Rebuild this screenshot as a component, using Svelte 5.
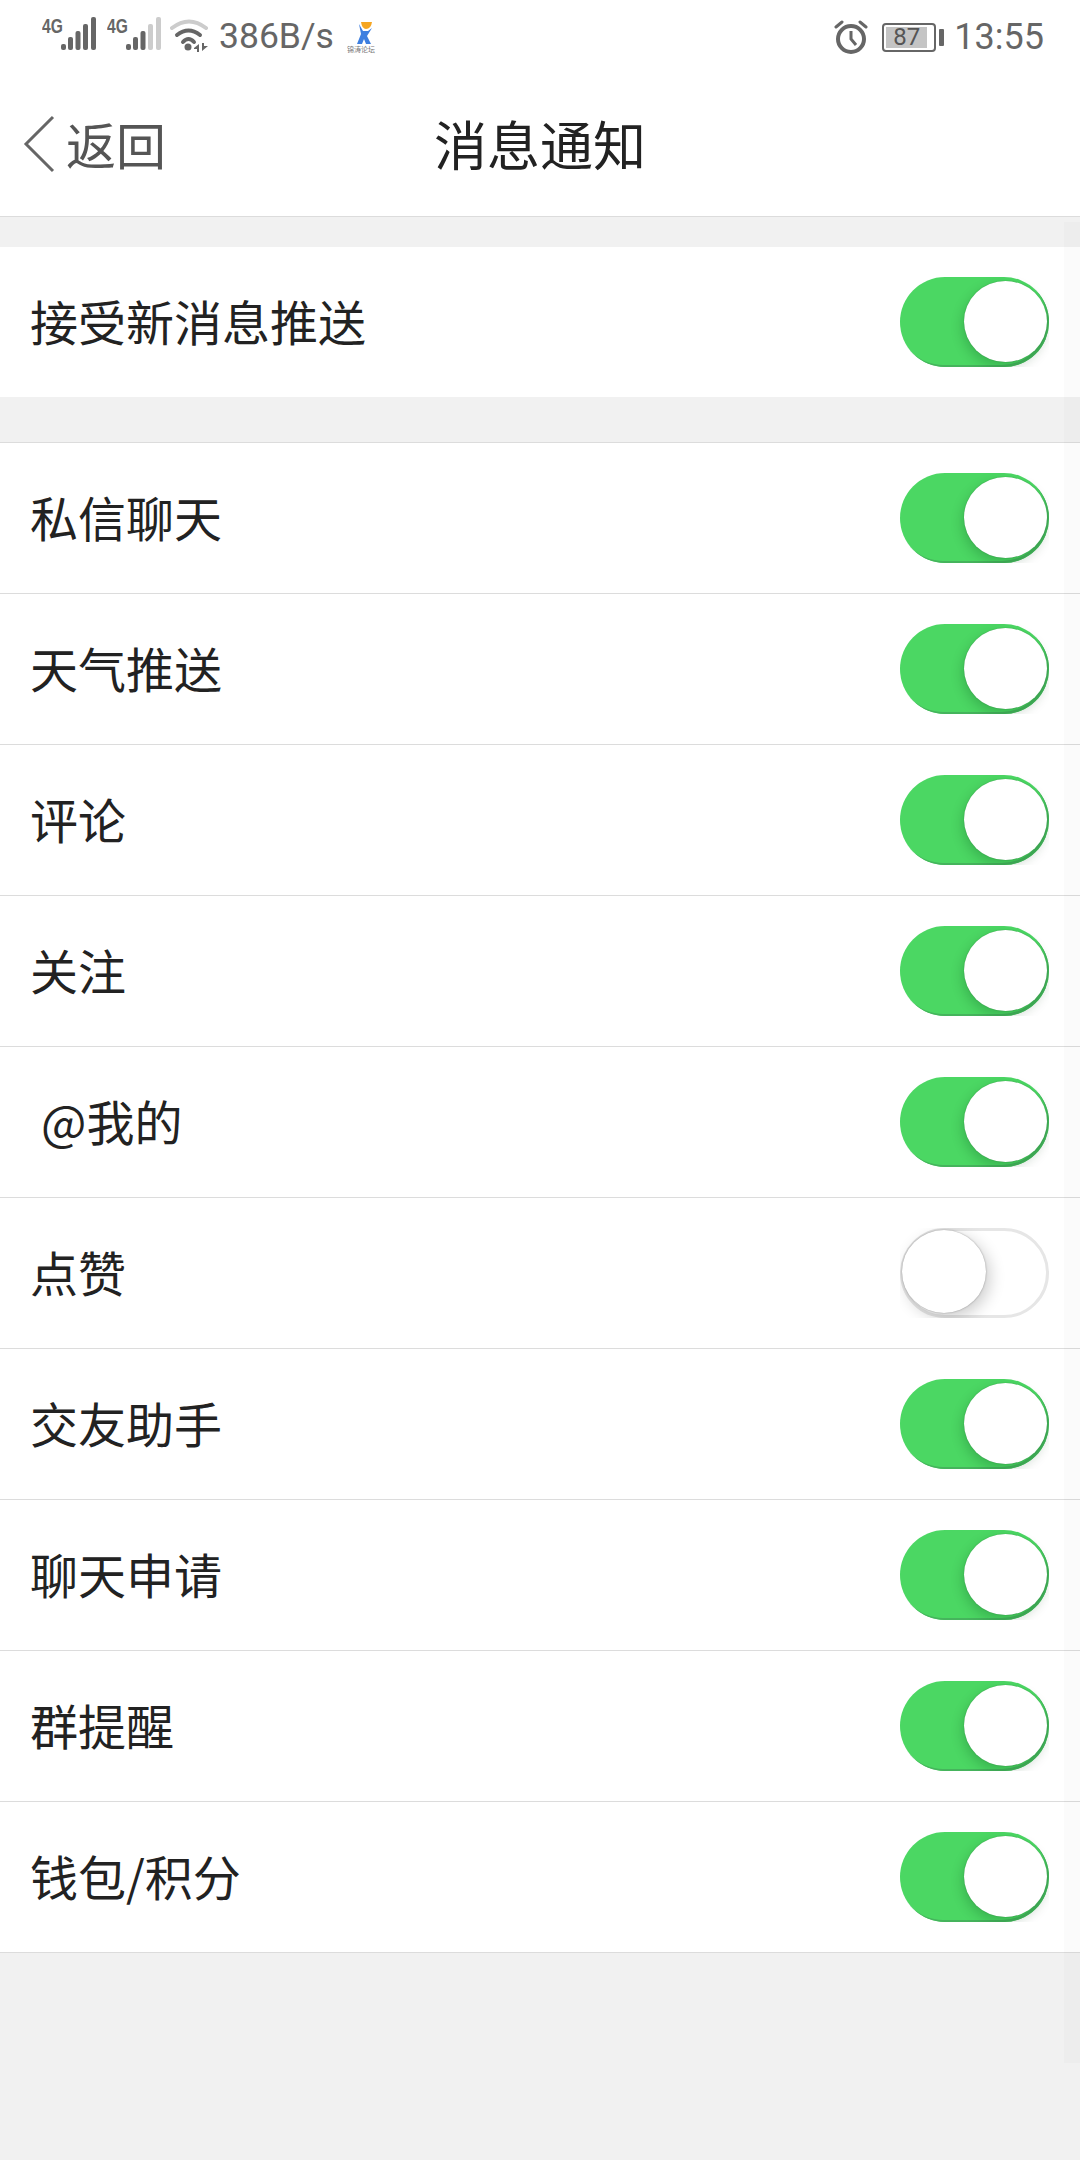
<script>
  const first = { label: '接受新消息推送', on: true };

  const rows = [
    { label: '私信聊天', on: true },
    { label: '天气推送', on: true },
    { label: '评论', on: true },
    { label: '关注', on: true },
    { label: '@我的', on: true, indent: true },
    { label: '点赞', on: false },
    { label: '交友助手', on: true },
    { label: '聊天申请', on: true },
    { label: '群提醒', on: true },
    { label: '钱包/积分', on: true }
  ];
</script>

{#snippet signal(weak)}
  <span class="sim">
    <span class="net">4G</span>
    <svg width="36" height="36" viewBox="0 0 36 36" class="bars">
      <rect x="0" y="27" width="5" height="6" rx="2" fill="#666" />
      <rect x="7" y="20" width="5" height="13" rx="2" fill="#666" />
      <rect x="14.500" y="14" width="5" height="19" rx="2" fill="#666" />
      <rect x="22" y="7" width="5" height="26" rx="2" fill={weak ? '#ccc' : '#666'} />
      <rect x="30" y="0" width="5" height="33" rx="2" fill={weak ? '#ccc' : '#666'} />
    </svg>
  </span>
{/snippet}

{#snippet toggle(on)}
  <span class="toggle" class:on>
    <span class="track"></span>
    <span class="knob"></span>
  </span>
{/snippet}

<div class="page">
  <div class="scroll-hint"></div>

  <header class="top">
    <div class="status">
      <div class="status-left">
        {@render signal(false)}
        {@render signal(true)}
        <svg class="wifi" width="40" height="36" viewBox="0 0 40 36">
          <path d="M2 9 Q19 -4 36 9" fill="none" stroke="#ccc" stroke-width="4" stroke-linecap="round" />
          <path d="M7 16 Q18.500 7 30 16" fill="none" stroke="#666" stroke-width="4" stroke-linecap="round" />
          <path d="M13 23 Q18.500 17 24 23" fill="none" stroke="#666" stroke-width="4" stroke-linecap="round" />
          <circle cx="18" cy="28" r="3.500" fill="#666" />
          <path d="M24 29 L29 25 V33 H27 V30 H24 Z M32 24 H34 V27 H38 L32 32 Z" fill="#666" />
        </svg>
        <span class="speed">386B/s</span>
        <svg class="app-logo" width="30" height="34" viewBox="0 0 30 34">
          <path d="M14 2 H25 Q24 9 19 9 Q15 9 14 2 Z" fill="#f5a623" />
          <path d="M12 4 L16 11 L21 11 L25 8 L20 16 L24 24 H19 L17 19 L15 24 H10 L14 14 Z" fill="#3d7fe0" />
          <text x="14" y="32" text-anchor="middle" font-size="7" fill="#777" font-family="'Noto Sans CJK SC', sans-serif">锦涛论坛</text>
        </svg>
      </div>
      <div class="status-right">
        <svg class="alarm" width="34" height="34" viewBox="0 0 34 34">
          <circle cx="17" cy="19" r="13" fill="none" stroke="#666" stroke-width="4" />
          <path d="M17 11 V19 L22 25" fill="none" stroke="#666" stroke-width="3" />
          <path d="M2 7 L8 2 M32 7 L26 2" fill="none" stroke="#666" stroke-width="3" stroke-linecap="round" />
        </svg>
        <span class="battery">
          <span class="cell"><span class="level">87</span></span>
          <span class="tip"></span>
        </span>
        <span class="clock">13:55</span>
      </div>
    </div>

    <nav class="nav">
      <div class="back">
        <svg width="34" height="58" viewBox="0 0 34 58">
          <path d="M30 2 L3 29 L30 56" fill="none" stroke="#666" stroke-width="3" />
        </svg>
        <span>返回</span>
      </div>
      <h1>消息通知</h1>
    </nav>
  </header>

  <section class="group single">
    <div class="row">
      <span class="label">{first.label}</span>
      {@render toggle(first.on)}
    </div>
  </section>

  <section class="group list">
    {#each rows as row}
      <div class="row">
        <span class="label" class:indent={row.indent}>{row.label}</span>
        {@render toggle(row.on)}
      </div>
    {/each}
  </section>
</div>

<style>
  :global(body) {
    margin: 0;
    background: #f1f1f1;
  }

  .page {
    position: relative;
    height: 2160px;
    overflow: hidden;
    background: #f1f1f1;
    font-family: 'Noto Sans CJK SC', 'Liberation Sans', sans-serif;
    color: #222;
  }

  .scroll-hint {
    position: absolute;
    z-index: 1;
    top: 222px;
    right: 0;
    width: 16px;
    height: 1841px;
    background: rgba(0, 0, 0, 0.015);
  }

  .top {
    background: #fff;
    border-bottom: 1px solid #dcdcdc;
    height: 216px;
  }

  .status {
    height: 72px;
    display: flex;
    justify-content: space-between;
    align-items: center;
    padding: 2px 36px 0 42px;
    box-sizing: border-box;
    color: #666;
  }

  .status-left,
  .status-right {
    display: flex;
    align-items: center;
  }

  .sim {
    display: flex;
    width: 65px;
    height: 40px;
    align-items: flex-start;
  }

  .net {
    width: 19px;
    font: bold 20px/1 'Liberation Sans', sans-serif;
    transform: scaleX(0.78);
    transform-origin: left top;
    margin-top: -1px;
  }

  .bars {
    display: block;
  }

  .wifi {
    margin-left: -2px;
  }

  .speed {
    margin-left: 9px;
    font: 35.5px/1 Roboto, sans-serif;
  }

  .app-logo {
    margin-left: 13px;
  }

  .battery {
    display: flex;
    align-items: center;
    margin-left: 14px;
  }

  .cell {
    box-sizing: border-box;
    width: 54px;
    height: 29px;
    border: 2px solid #666;
    border-radius: 4px;
    padding: 2px;
    display: flex;
  }

  .level {
    width: 41px;
    background: #c4c4c4;
    color: #555;
    font: 24px/21px Roboto, sans-serif;
    text-align: center;
  }

  .tip {
    width: 5px;
    height: 17px;
    margin-left: 3px;
    background: #666;
    border-radius: 1px;
  }

  .clock {
    margin-left: 10px;
    font: 36px/1 Roboto, sans-serif;
  }

  .nav {
    position: relative;
    height: 144px;
    display: flex;
    align-items: center;
    justify-content: center;
  }

  .back {
    position: absolute;
    left: 23px;
    top: 0;
    bottom: 0;
    display: flex;
    align-items: center;
    gap: 9px;
    color: #555;
    font-size: 50px;
  }

  .back span {
    position: relative;
    top: -1px;
  }

  .back svg {
    display: block;
  }

  h1 {
    margin: 0 0 3px;
    font-size: 53px;
    font-weight: 400;
    color: #222;
  }

  .group {
    background: #fff;
  }

  .single {
    margin-top: 30px;
  }

  .list {
    margin-top: 45px;
    border-top: 1px solid #dcdcdc;
  }

  .row {
    box-sizing: border-box;
    height: 150px;
    display: flex;
    align-items: center;
    justify-content: space-between;
    padding: 0 31px 0 30px;
  }

  .list .row {
    height: 151px;
    border-bottom: 1px solid #dcdcdc;
  }

  .label {
    font-size: 48px;
    line-height: 1;
    margin-bottom: 4px;
  }

  .indent {
    margin-left: 11px;
  }

  .toggle {
    position: relative;
    display: block;
    width: 149px;
    height: 90px;
    overflow: hidden;
    flex: none;
  }

  .track {
    position: absolute;
    inset: 0;
    box-sizing: border-box;
    border-radius: 45px;
    background: #fff;
    border: 3px solid #e6e6e6;
  }

  .on .track {
    background: #4bd763;
    border: none;
    box-shadow: inset -2px -2px 0 #45b45c;
  }

  .knob {
    position: absolute;
    left: 2px;
    top: 2px;
    width: 84px;
    height: 83px;
    border-radius: 50%;
    background: #fff;
    box-shadow: 0 0 2px rgba(0, 0, 0, 0.35), 4px 5px 16px rgba(0, 0, 0, 0.2);
  }

  .on .knob {
    left: 64px;
    top: 4px;
    width: 83px;
    height: 81px;
    box-shadow: 0 0 1px rgba(0, 80, 20, 0.5), -2px 5px 12px rgba(0, 60, 20, 0.22);
  }
</style>
